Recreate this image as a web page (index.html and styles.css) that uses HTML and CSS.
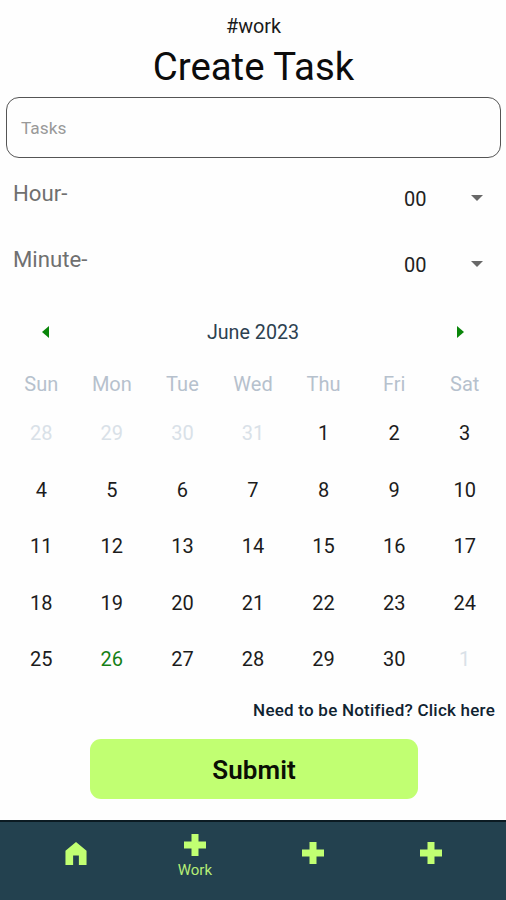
FILE: index.html
```
<!DOCTYPE html>
<html lang="en">
<head>
<meta charset="utf-8">
<title>Create Task</title>
<link rel="stylesheet" href="styles.css">
</head>
<body>
<main class="screen">
  <header class="header">
    <p class="tag">#work</p>
    <h1 class="title">Create Task</h1>
  </header>
  <div class="task-field">Tasks</div>
  <section class="pickers">
    <div class="picker">
      <span class="picker-label">Hour-</span>
      <span class="picker-value">00</span>
      <svg class="caret" viewBox="0 0 12 6"><path d="M0 0H12L6 6Z"/></svg>
    </div>
    <div class="picker">
      <span class="picker-label">Minute-</span>
      <span class="picker-value">00</span>
      <svg class="caret" viewBox="0 0 12 6"><path d="M0 0H12L6 6Z"/></svg>
    </div>
  </section>
  <section class="calendar">
    <div class="month-bar">
      <svg class="arrow" viewBox="0 0 7 12"><path d="M7 0V12L0 6Z"/></svg>
      <span class="month">June 2023</span>
      <svg class="arrow" viewBox="0 0 7 12"><path d="M0 0V12L7 6Z"/></svg>
    </div>
    <div class="weekdays">
      <span>Sun</span><span>Mon</span><span>Tue</span><span>Wed</span><span>Thu</span><span>Fri</span><span>Sat</span>
    </div>
    <div class="days">
      <span class="out">28</span><span class="out">29</span><span class="out">30</span><span class="out">31</span><span>1</span><span>2</span><span>3</span>
      <span>4</span><span>5</span><span>6</span><span>7</span><span>8</span><span>9</span><span>10</span>
      <span>11</span><span>12</span><span>13</span><span>14</span><span>15</span><span>16</span><span>17</span>
      <span>18</span><span>19</span><span>20</span><span>21</span><span>22</span><span>23</span><span>24</span>
      <span>25</span><span class="today">26</span><span>27</span><span>28</span><span>29</span><span>30</span><span class="out">1</span>
    </div>
  </section>
  <p class="notify">Need to be Notified? Click here</p>
  <button class="submit" type="button">Submit</button>
  <nav class="tabs">
    <div class="tab"><svg class="home" viewBox="0 0 22 24"><path d="M11 0L22 9V24H14V14H8V24H0V9Z"/></svg></div>
    <div class="tab active"><svg class="plus" viewBox="0 0 22 22"><path d="M7.5 0h7v7.5H22v7h-7.5V22h-7v-7.5H0v-7h7.5Z"/></svg><span class="tab-label">Work</span></div>
    <div class="tab"><svg class="plus" viewBox="0 0 22 22"><path d="M7.5 0h7v7.5H22v7h-7.5V22h-7v-7.5H0v-7h7.5Z"/></svg></div>
    <div class="tab"><svg class="plus" viewBox="0 0 22 22"><path d="M7.5 0h7v7.5H22v7h-7.5V22h-7v-7.5H0v-7h7.5Z"/></svg></div>
  </nav>
</main>
</body>
</html>
```
FILE: styles.css
```
* { box-sizing: border-box; margin: 0; padding: 0; }
body { background: #fefefe; font-family: Roboto, sans-serif; color: #111; }
svg { display: block; }
.screen { width: 506px; height: 900px; display: flex; flex-direction: column; overflow: hidden; }
.header { height: 97px; padding: 15px 0 0 1px; text-align: center; }
.tag { font-size: 19.8px; line-height: 24px; color: #1a1a1a; }
.title { font-size: 38.4px; line-height: 56px; font-weight: 400; color: #0c0c0c; }
.task-field { height: 61px; margin: 0 5px 0 6px; padding-left: 14px; border: 1.5px solid #555; border-radius: 13px; font-size: 17.3px; line-height: 60px; color: #999; }
.pickers { height: 148px; padding: 7px 23px 0 13px; }
.picker { height: 66px; display: flex; align-items: center; }
.picker-label { flex: 1; font-size: 22.2px; line-height: 28px; color: #707070; padding-bottom: 11px; }
.picker-value { width: 67px; font-size: 20px; line-height: 24px; padding-top: 1px; color: #222; }
.caret { width: 12px; height: 6px; fill: #686868; }
.calendar { padding: 0 6px; }
.month-bar { height: 51px; padding: 0 36px; display: flex; align-items: center; justify-content: space-between; }
.month { padding-top: 1px; font-size: 19.7px; color: #2d4150; }
.arrow { width: 7px; height: 12px; fill: #0a860a; }
.weekdays, .days { display: grid; grid-template-columns: repeat(7, 1fr); text-align: center; font-size: 20px; }
.weekdays { height: 47px; line-height: 54px; color: #b6c1cd; }
.days { grid-auto-rows: 56.6px; line-height: 58.4px; color: #1c1c1c; }
.out { color: #d9e1e8; }
.today { color: #168016; }
.notify { height: 52px; padding-right: 11px; line-height: 47px; text-align: right; font-size: 17px; letter-spacing: 0.23px; font-weight: 500; color: #102331; }
.submit { width: 328px; height: 60px; margin-left: 90px; border: 0; border-radius: 11px; background: #c1ff72; font: 600 26px/30px Roboto, sans-serif; letter-spacing: 0.1px; padding-top: 2px; color: #0b0f05; }
.tabs { height: 80px; margin-top: auto; padding: 0 16px 0 17px; border-top: 2px solid #0b1a22; background: #23414f; display: grid; grid-template-columns: repeat(4, 1fr); }
.tab { padding-top: 20px; display: flex; flex-direction: column; align-items: center; }
.tab.active { padding-top: 12px; padding-left: 1px; }
.home { width: 22px; height: 23px; fill: #c1ff72; }
.plus { width: 22px; height: 22px; fill: #c1ff72; }
.tab-label { margin-top: 5px; font-size: 15px; line-height: 18px; color: #b6ee76; }
```
